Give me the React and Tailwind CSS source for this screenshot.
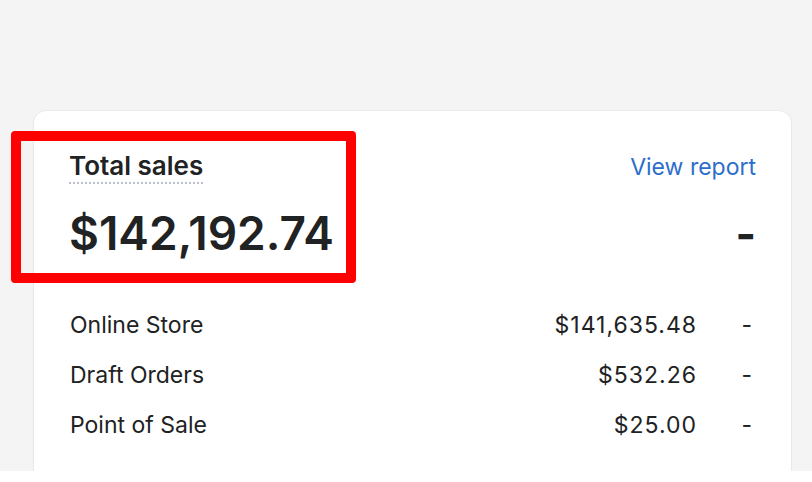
const rows = [
  { label: "Online Store", amount: "$141,635.48" },
  { label: "Draft Orders", amount: "$532.26" },
  { label: "Point of Sale", amount: "$25.00" },
];

function SalesCard() {
  return (
    <div className="bg-white rounded-t-[12px] shadow-[0_0_2px_rgba(0,0,0,0.12),0_1px_2px_rgba(0,0,0,0.06)] pt-[39px] px-[35px] pb-[60px] text-[#202223]">
      <div className="flex items-baseline justify-between">
        <span className="text-[26px] leading-[32px] font-semibold border-b-2 border-dotted border-[#bcc3cf]">
          Total sales
        </span>
        <a className="text-[23px] leading-[32px] text-[#2c6ecb]">View report</a>
      </div>
      <div className="flex items-baseline justify-between mt-[23px]">
        <span className="text-[46px] leading-[52px] font-semibold">
          $142,192.74
        </span>
        <span className="text-[44px] leading-[52px] font-bold">-</span>
      </div>
      <div className="mt-[40px] flex flex-col">
        {rows.map((row) => (
          <div key={row.label} className="flex items-baseline h-[50px] leading-[50px] text-[23px]">
            <span className="flex-1 pl-[1px]">{row.label}</span>
            <span className="tracking-[1px]">{row.amount}</span>
            <span className="w-[59px] text-right pr-[4px]">-</span>
          </div>
        ))}
      </div>
    </div>
  );
}

export default function App() {
  return (
    <div
      className="relative h-[471px] overflow-hidden bg-[#f4f4f4] pt-[111px] pl-[34px] pr-[21px]"
      style={{ fontFamily: "Inter, 'Liberation Sans', sans-serif" }}
    >
      <SalesCard />
      <div className="absolute left-[11px] top-[131px] w-[345px] h-[152px] border-[10px] border-[#ff0000] rounded-[4px]" />
    </div>
  );
}
